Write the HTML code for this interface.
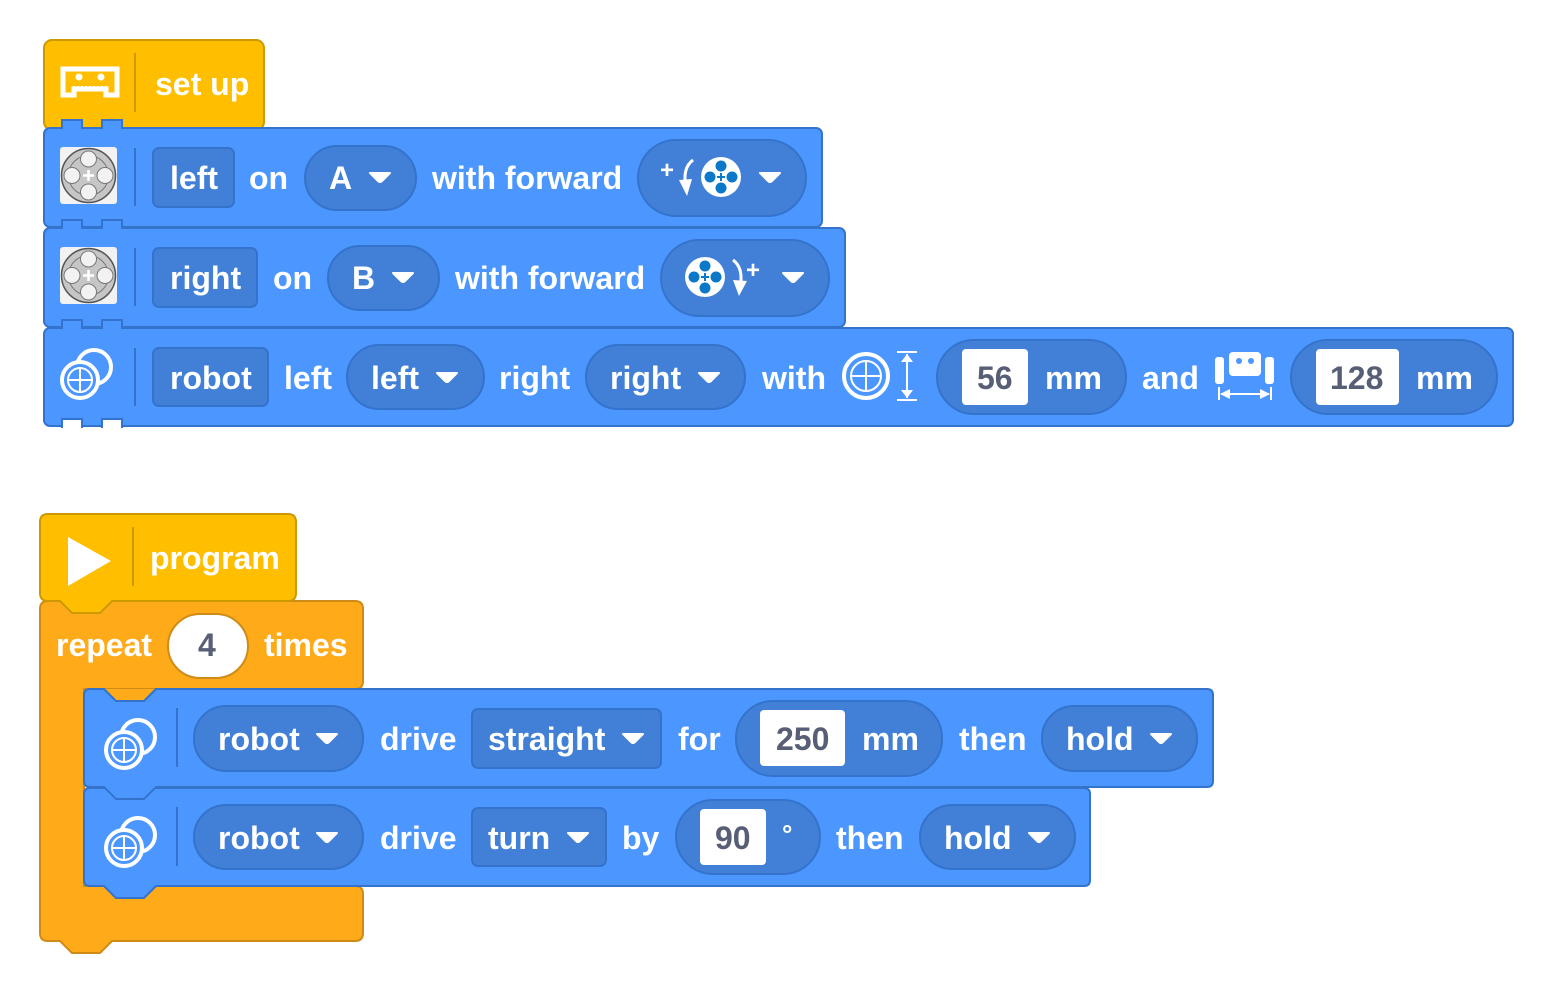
<!DOCTYPE html>
<html><head><meta charset="utf-8"><style>
html,body{margin:0;padding:0;background:#fff;width:1553px;height:994px;overflow:hidden}
svg{display:block}
text{font-family:"Liberation Sans",sans-serif;font-weight:bold;font-size:32px;fill:#fff}
.dk{fill:#575e75}
.pill{fill:#4280d7;stroke:#3373cc;stroke-width:2}
.blk{fill:#4c97ff;stroke:#3373cc;stroke-width:2}
.wb{fill:#fff}
</style></head><body>
<svg width="1553" height="994" viewBox="0 0 1553 994" xmlns="http://www.w3.org/2000/svg">
<defs>
<g id="arr"><path d="M-10,-4 L10,-4 L2,4 Q0,6 -2,4 Z" fill="#fff" stroke="#fff" stroke-width="2" stroke-linejoin="round"/></g>
<g id="motor">
<rect x="0" y="0" width="57" height="57" rx="3" fill="#f2f2f2"/>
<circle cx="28.5" cy="28.5" r="27" fill="#c6c6c6" stroke="#555" stroke-width="1.5"/>
<circle cx="28.5" cy="28.5" r="20" fill="none" stroke="#777" stroke-width="1"/>
<circle cx="28.5" cy="12" r="8" fill="#f2f2f2" stroke="#777"/>
<circle cx="28.5" cy="45" r="8" fill="#f2f2f2" stroke="#777"/>
<circle cx="12" cy="28.5" r="8" fill="#f2f2f2" stroke="#777"/>
<circle cx="45" cy="28.5" r="8" fill="#f2f2f2" stroke="#777"/>
<path d="M28.5,23v11M23,28.5h11" stroke="#fff" stroke-width="2.5"/>
</g>
<g id="wheels" fill="none" stroke="#fff">
<circle cx="34" cy="20" r="17" stroke-width="4"/>
<circle cx="20" cy="33" r="18" fill="#4c97ff" stroke-width="4"/>
<circle cx="20" cy="33" r="12" stroke-width="2"/>
<path d="M20,21v24M8,33h24" stroke-width="2"/>
</g>
<g id="mwheel">
<circle cx="0" cy="0" r="20" fill="#fff"/>
<circle cx="0" cy="-11" r="5.5" fill="#0b78c8"/><circle cx="0" cy="11" r="5.5" fill="#0b78c8"/>
<circle cx="-11" cy="0" r="5.5" fill="#0b78c8"/><circle cx="11" cy="0" r="5.5" fill="#0b78c8"/>
<path d="M0,-4v8M-4,0h8" stroke="#0b78c8" stroke-width="2"/>
</g>
</defs>

<!-- SETUP STACK -->
<rect x="44" y="40" width="220" height="90" rx="8" fill="#ffbf00" stroke="#cc9900" stroke-width="2"/>
<g fill="none" stroke="#fff" stroke-width="5">
<path d="M63,95 V69 H117 V95 H106 V89 H74 V95 Z"/>
</g>
<circle cx="79" cy="77" r="3.5" fill="#fff"/><circle cx="101" cy="77" r="3.5" fill="#fff"/>
<path d="M73,87h34" stroke="#fff" stroke-width="2" stroke-dasharray="2 2"/>
<line x1="135" y1="53" x2="135" y2="112" stroke="#cc9900" stroke-width="2"/>
<text x="155" y="95">set up</text>

<!-- block 3 -->
<rect class="blk" x="44" y="328" width="1469" height="98" rx="6"/>
<rect x="62" y="419" width="20" height="9" fill="#fff"/><rect x="102" y="419" width="20" height="9" fill="#fff"/>
<path d="M62,428V419H82V428M102,428V419H122V428" fill="none" stroke="#3373cc" stroke-width="2"/>
<!-- block 2 -->
<rect class="blk" x="44" y="228" width="801" height="99" rx="6"/>
<!-- block 1 -->
<rect class="blk" x="44" y="128" width="778" height="99" rx="6"/>
<!-- tabs -->
<g class="blk"><path d="M62,129V120H82V129M102,129V120H122V129"/><path d="M62,229V220H82V229M102,229V220H122V229"/><path d="M62,329V320H82V329M102,329V320H122V329"/></g>
<rect x="63" y="122" width="18" height="8" fill="#4c97ff"/><rect x="103" y="122" width="18" height="8" fill="#4c97ff"/>
<rect x="63" y="222" width="18" height="8" fill="#4c97ff"/><rect x="103" y="222" width="18" height="8" fill="#4c97ff"/>
<rect x="63" y="322" width="18" height="8" fill="#4c97ff"/><rect x="103" y="322" width="18" height="8" fill="#4c97ff"/>

<!-- row 1 -->
<use href="#motor" x="60" y="147"/>
<line x1="135" y1="148" x2="135" y2="206" stroke="#3373cc" stroke-width="2"/>
<rect class="pill" x="153" y="148" width="81" height="59" rx="6"/>
<text x="170" y="189">left</text>
<text x="249" y="189">on</text>
<rect class="pill" x="305" y="146" width="111" height="64" rx="32"/>
<text x="329" y="189">A</text><use href="#arr" x="380" y="177"/>
<text x="432" y="189">with forward</text>
<rect class="pill" x="638" y="140" width="168" height="76" rx="38"/>
<text x="660" y="178" style="font-size:24px">+</text>
<path d="M693,160 Q682,168 686,188" fill="none" stroke="#fff" stroke-width="3"/>
<path d="M679,180 L687,196 L692,179 Z" fill="#fff"/>
<use href="#mwheel" x="721" y="177"/>
<use href="#arr" x="770" y="177"/>

<!-- row 2 -->
<use href="#motor" x="60" y="247"/>
<line x1="135" y1="248" x2="135" y2="306" stroke="#3373cc" stroke-width="2"/>
<rect class="pill" x="153" y="248" width="104" height="59" rx="6"/>
<text x="170" y="289">right</text>
<text x="273" y="289">on</text>
<rect class="pill" x="328" y="246" width="111" height="64" rx="32"/>
<text x="352" y="289">B</text><use href="#arr" x="403" y="277"/>
<text x="455" y="289">with forward</text>
<rect class="pill" x="661" y="240" width="168" height="76" rx="38"/>
<use href="#mwheel" x="705" y="277"/>
<path d="M733,260 Q744,268 740,288" fill="none" stroke="#fff" stroke-width="3"/>
<path d="M733,280 L739,296 L747,281 Z" fill="#fff"/>
<text x="746" y="278" style="font-size:24px">+</text>
<use href="#arr" x="793" y="277"/>

<!-- row 3 -->
<use href="#wheels" x="60" y="347"/>
<line x1="135" y1="348" x2="135" y2="406" stroke="#3373cc" stroke-width="2"/>
<rect class="pill" x="153" y="348" width="115" height="58" rx="6"/>
<text x="170" y="389">robot</text>
<text x="284" y="389">left</text>
<rect class="pill" x="347" y="345" width="137" height="64" rx="32"/>
<text x="371" y="389">left</text><use href="#arr" x="447" y="377"/>
<text x="499" y="389">right</text>
<rect class="pill" x="586" y="345" width="159" height="64" rx="32"/>
<text x="610" y="389">right</text><use href="#arr" x="709" y="377"/>
<text x="762" y="389">with</text>
<g fill="none" stroke="#fff">
<circle cx="866" cy="376" r="22" stroke-width="4"/>
<circle cx="866" cy="376" r="15" stroke-width="2"/>
<path d="M866,361v30M851,376h30" stroke-width="2"/>
<path d="M897,352h20M897,400h20M907,354v44" stroke-width="2"/>
</g>
<path d="M901,362l6,-8l6,8zM901,390l6,8l6,-8z" fill="#fff"/>
<rect class="pill" x="937" y="340" width="189" height="74" rx="37"/>
<rect x="962" y="349" width="66" height="56" rx="4" fill="#fff"/>
<text class="dk" x="977" y="389">56</text>
<text x="1045" y="389">mm</text>
<text x="1142" y="389">and</text>
<rect x="1215" y="357" width="9" height="27" rx="3" fill="#fff"/>
<rect x="1265" y="357" width="9" height="27" rx="3" fill="#fff"/>
<rect x="1229" y="352" width="32" height="24" rx="4" fill="#fff"/>
<circle cx="1239" cy="361" r="3" fill="#4c97ff"/><circle cx="1251" cy="361" r="3" fill="#4c97ff"/>
<path d="M1219,387v13M1271,387v13M1221,394h48" stroke="#fff" stroke-width="2"/>
<path d="M1220,394l10,-5v10zM1270,394l-10,-5v10z" fill="#fff"/>
<rect class="pill" x="1291" y="340" width="206" height="74" rx="37"/>
<rect x="1316" y="349" width="83" height="56" rx="4" fill="#fff"/>
<text class="dk" x="1330" y="389">128</text>
<text x="1416" y="389">mm</text>

<!-- PROGRAM STACK -->
<path d="M48,601 H355 q8,0 8,8 V681 q0,8 -8,8 H84 V886 H355 q8,0 8,8 V933 q0,8 -8,8 H112 l-12,12 h-28 l-12,-12 H48 q-8,0 -8,-8 V609 q0,-8 8,-8 Z" fill="#ffab19" stroke="#cf8b17" stroke-width="2"/>
<path d="M48,514 H288 q8,0 8,8 V593 q0,8 -8,8 H112 l-12,12 h-28 l-12,-12 H48 q-8,0 -8,-8 V522 q0,-8 8,-8 Z" fill="#ffbf00" stroke="#cc9900" stroke-width="2"/>
<path d="M68,537 L111,561 L68,586 Z" fill="#fff"/>
<line x1="133" y1="527" x2="133" y2="586" stroke="#cc9900" stroke-width="2"/>
<text x="150" y="569">program</text>
<text x="56" y="656">repeat</text>
<rect x="168" y="614" width="80" height="64" rx="32" fill="#fff" stroke="#cf8b17" stroke-width="2"/>
<text class="dk" x="198" y="656">4</text>
<text x="264" y="656">times</text>

<!-- inner block 2 -->
<path class="blk" d="M90,788 H1084 q6,0 6,6 V880 q0,6 -6,6 H156 l-12,12 h-28 l-12,-12 H90 q-6,0 -6,-6 V794 q0,-6 6,-6 Z"/>
<!-- inner block 1 -->
<path class="blk" d="M90,689 H104 l12,12 h28 l12,-12 H1207 q6,0 6,6 V781 q0,6 -6,6 H156 l-12,12 h-28 l-12,-12 H90 q-6,0 -6,-6 V695 q0,-6 6,-6 Z"/>
<path d="M105,689 l12,12 h26 l12,-12 Z" fill="#ffab19"/>
<path d="M104,689 l12,12 h28 l12,-12" fill="none" stroke="#3373cc" stroke-width="2"/>

<use href="#wheels" x="104" y="717"/>
<line x1="177" y1="708" x2="177" y2="767" stroke="#3373cc" stroke-width="2"/>
<rect class="pill" x="194" y="706" width="169" height="65" rx="32"/>
<text x="218" y="750">robot</text><use href="#arr" x="327" y="738"/>
<text x="380" y="750">drive</text>
<rect class="pill" x="472" y="709" width="189" height="59" rx="6"/>
<text x="488" y="750">straight</text><use href="#arr" x="633" y="738"/>
<text x="678" y="750">for</text>
<rect class="pill" x="736" y="701" width="206" height="75" rx="37"/>
<rect x="760" y="710" width="85" height="56" rx="4" fill="#fff"/>
<text class="dk" x="776" y="750">250</text>
<text x="862" y="750">mm</text>
<text x="959" y="750">then</text>
<rect class="pill" x="1042" y="706" width="155" height="65" rx="32"/>
<text x="1066" y="750">hold</text><use href="#arr" x="1161" y="738"/>

<use href="#wheels" x="104" y="815"/>
<line x1="177" y1="807" x2="177" y2="866" stroke="#3373cc" stroke-width="2"/>
<rect class="pill" x="194" y="805" width="169" height="64" rx="32"/>
<text x="218" y="849">robot</text><use href="#arr" x="327" y="837"/>
<text x="380" y="849">drive</text>
<rect class="pill" x="472" y="808" width="134" height="58" rx="6"/>
<text x="488" y="849">turn</text><use href="#arr" x="578" y="837"/>
<text x="622" y="849">by</text>
<rect class="pill" x="676" y="800" width="144" height="74" rx="37"/>
<rect x="700" y="809" width="66" height="56" rx="4" fill="#fff"/>
<text class="dk" x="715" y="849">90</text>
<text x="782" y="843" style="font-size:26px">°</text>
<text x="836" y="849">then</text>
<rect class="pill" x="920" y="805" width="155" height="64" rx="32"/>
<text x="944" y="849">hold</text><use href="#arr" x="1039" y="837"/>
</svg>
</body></html>
